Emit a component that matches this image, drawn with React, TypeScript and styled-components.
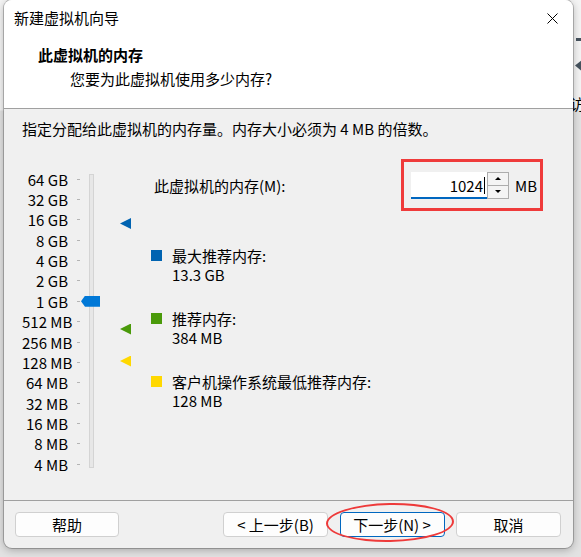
import React from "react";
import styled, { createGlobalStyle } from "styled-components";

const GlobalStyle = createGlobalStyle`
  html, body {
    margin: 0;
    padding: 0;
  }
  body {
    background: #e9e9e9;
    font-family: "Noto Sans CJK SC", "Noto Sans", sans-serif;
    font-size: 15px;
    color: #000;
  }
`;

const Screen = styled.div`
  position: relative;
  width: 581px;
  height: 557px;
  overflow: hidden;
  padding-left: 4px;
  box-sizing: border-box;
  background: linear-gradient(#f4f4f4 0, #f4f4f4 110px, #e2e2e2 111px);
`;

const DeskDash = styled.div`
  position: absolute;
  left: 576px;
  top: 38px;
  width: 8px;
  height: 3px;
  background: #46535e;
`;

const DeskArrow = styled.div`
  position: absolute;
  left: 575px;
  top: 59px;
  width: 8px;
  height: 13px;
  background: #46535e;
  clip-path: polygon(0 50%, 100% 0, 100% 100%);
`;

const DeskGlyph = styled.div`
  position: absolute;
  left: 570px;
  top: 96px;
  font-size: 15px;
  line-height: 16px;
`;

const Dialog = styled.div`
  position: relative;
  z-index: 1;
  width: 569px;
  height: 548px;
  display: flex;
  flex-direction: column;
  border-radius: 8px;
  overflow: hidden;
  background: #f0f0f0;
  box-shadow: 0 0 0 1px rgba(0, 0, 0, 0.22), 0 2px 8px rgba(0, 0, 0, 0.28);
`;

const Header = styled.div`
  flex-shrink: 0;
  height: 108px;
  background: #fff;
  border-bottom: 1px solid #a0a0a0;
`;

const TitleBar = styled.div`
  height: 36px;
  display: flex;
  align-items: center;
  justify-content: space-between;
  padding-left: 10px;
  line-height: 20px;
`;

const CloseButton = styled.div`
  width: 42px;
  height: 36px;
  display: flex;
  align-items: center;
  justify-content: center;
`;

const HeaderText = styled.div`
  padding-left: 34px;
  margin-top: 9px;
  line-height: 20px;
`;

const HeaderTitle = styled.div`
  font-weight: 700;
`;

const HeaderSubtitle = styled.div`
  padding-left: 32px;
  margin-top: 4px;
`;

const Body = styled.div`
  flex: 1;
  padding: 10px 0 0 18px;
  box-sizing: border-box;
`;

const Description = styled.div`
  line-height: 20px;
`;

const Main = styled.div`
  display: flex;
  margin-top: 30px;
`;

const Slider = styled.div`
  position: relative;
  width: 129px;
  flex-shrink: 0;
`;

const ScaleRow = styled.div`
  height: 20.36px;
  display: flex;
  align-items: center;
`;

const ScaleLabel = styled.div`
  width: 46px;
  text-align: right;
  line-height: 1;
  white-space: nowrap;
`;

const Tick = styled.div`
  width: 3px;
  height: 1px;
  margin-left: 9px;
  background: #b4b4b4;
`;

const Track = styled.div`
  position: absolute;
  left: 67px;
  top: 5px;
  width: 5px;
  height: 294px;
  box-sizing: border-box;
  background: #e7e7e7;
  border: 1px solid #d4d4d4;
`;

const Thumb = styled.div<{ $center: number }>`
  position: absolute;
  left: 59px;
  top: ${({ $center }) => $center - 5.5}px;
  width: 19px;
  height: 11px;
  background: #0078d7;
  clip-path: polygon(0 50%, 4px 0, 100% 0, 100% 100%, 4px 100%);
`;

const Marker = styled.div<{ $color: string; $center: number }>`
  position: absolute;
  left: 98px;
  top: ${({ $center }) => $center - 5.5}px;
  width: 11px;
  height: 11px;
  background: ${({ $color }) => $color};
  clip-path: polygon(0 50%, 100% 0, 100% 100%);
`;

const RightPane = styled.div`
  flex: 1;
  display: flex;
  flex-direction: column;
`;

const MemoryRow = styled.div`
  display: flex;
  align-items: center;
  height: 32px;
`;

const MemoryLabel = styled.div`
  width: 260px;
  padding-left: 3px;
  box-sizing: border-box;
`;

const InputGroup = styled.div`
  position: relative;
  display: flex;
  align-items: center;
`;

const NumberField = styled.div`
  width: 76px;
  height: 27px;
  box-sizing: border-box;
  background: #fff;
  border-bottom: 2px solid #0067c0;
  display: flex;
  align-items: center;
  justify-content: flex-end;
  padding: 2px 2px 0 0;
`;

const Caret = styled.span`
  display: inline-block;
  width: 1px;
  height: 17px;
  margin-left: 1px;
  background: #000;
`;

const Spinner = styled.div`
  width: 22px;
  height: 27px;
  box-sizing: border-box;
  display: flex;
  flex-direction: column;
  border: 1px solid #adadad;
`;

const SpinHalf = styled.div<{ $top?: boolean }>`
  flex: 1;
  display: flex;
  align-items: center;
  justify-content: center;
  background: #f4f4f4;
  border-bottom: ${({ $top }) => ($top ? "1px solid #adadad" : "none")};
`;

const SpinArrow = styled.div<{ $up?: boolean }>`
  width: 0;
  height: 0;
  border-left: 3px solid transparent;
  border-right: 3px solid transparent;
  ${({ $up }) =>
    $up ? "border-bottom: 3px solid #000;" : "border-top: 3px solid #000;"}
`;

const Unit = styled.div`
  margin-left: 6px;
`;

const RedBox = styled.div`
  position: absolute;
  left: -10px;
  top: -13px;
  width: 142px;
  height: 52px;
  box-sizing: border-box;
  border: 3px solid #ef3b3b;
  pointer-events: none;
`;

const Legend = styled.div`
  display: flex;
  flex-direction: column;
  gap: 25px;
  margin-top: 45px;
`;

const LegendItem = styled.div`
  line-height: 19px;
`;

const LegendHead = styled.div`
  display: flex;
  align-items: center;
`;

const Swatch = styled.div<{ $color: string }>`
  width: 11px;
  height: 11px;
  margin-right: 10px;
  background: ${({ $color }) => $color};
`;

const LegendValue = styled.div`
  padding-left: 21px;
`;

const Footer = styled.div`
  flex-shrink: 0;
  height: 47px;
  box-sizing: content-box;
  border-top: 1px solid #a0a0a0;
  display: flex;
  align-items: flex-start;
  padding: 11px 12px 0 11px;
  box-sizing: border-box;
  height: 48px;
`;

const Spacer = styled.div`
  flex: 1;
`;

const ButtonGroup = styled.div`
  display: flex;
  gap: 11.5px;
`;

const ButtonWrap = styled.div`
  position: relative;
`;

const Button = styled.div<{ $primary?: boolean }>`
  width: 105px;
  height: 25px;
  box-sizing: border-box;
  display: flex;
  align-items: center;
  justify-content: center;
  background: #fdfdfd;
  border: 1px solid ${({ $primary }) => ($primary ? "#0067c0" : "#d0d0d0")};
  border-radius: 4px;
  line-height: 1;
  white-space: pre;
`;

const RedEllipse = styled.div`
  position: absolute;
  left: -14px;
  top: -9px;
  width: 128px;
  height: 39px;
  box-sizing: border-box;
  border: 2.5px solid #ee3a3a;
  border-radius: 50%;
  transform: rotate(-1deg);
  pointer-events: none;
`;

const scale = [
  "64 GB",
  "32 GB",
  "16 GB",
  "8 GB",
  "4 GB",
  "2 GB",
  "1 GB",
  "512 MB",
  "256 MB",
  "128 MB",
  "64 MB",
  "32 MB",
  "16 MB",
  "8 MB",
  "4 MB",
];

const legend = [
  { color: "#0063b1", label: "最大推荐内存:", value: "13.3 GB", center: 54.5 },
  { color: "#4a9a0a", label: "推荐内存:", value: "384 MB", center: 160 },
  { color: "#ffd800", label: "客户机操作系统最低推荐内存:", value: "128 MB", center: 192 },
];

const rowCenter = (i: number) => 10.18 + i * 20.36;

export default function App() {
  return (
    <>
      <GlobalStyle />
      <Screen>
        <DeskDash />
        <DeskArrow />
        <DeskGlyph>访</DeskGlyph>
        <Dialog>
          <Header>
            <TitleBar>
              <span>新建虚拟机向导</span>
              <CloseButton>
                <svg width="11" height="11" viewBox="0 0 11 11">
                  <path d="M0.5 0.5 L10.5 10.5 M10.5 0.5 L0.5 10.5" stroke="#000" strokeWidth="1" />
                </svg>
              </CloseButton>
            </TitleBar>
            <HeaderText>
              <HeaderTitle>此虚拟机的内存</HeaderTitle>
              <HeaderSubtitle>您要为此虚拟机使用多少内存?</HeaderSubtitle>
            </HeaderText>
          </Header>
          <Body>
            <Description>指定分配给此虚拟机的内存量。内存大小必须为 4 MB 的倍数。</Description>
            <Main>
              <Slider>
                {scale.map((s) => (
                  <ScaleRow key={s}>
                    <ScaleLabel>{s}</ScaleLabel>
                    <Tick />
                  </ScaleRow>
                ))}
                <Track />
                <Thumb $center={rowCenter(6)} />
                {legend.map((l) => (
                  <Marker key={l.color} $color={l.color} $center={l.center} />
                ))}
              </Slider>
              <RightPane>
                <MemoryRow>
                  <MemoryLabel>此虚拟机的内存(M):</MemoryLabel>
                  <InputGroup>
                    <NumberField>
                      1024
                      <Caret />
                    </NumberField>
                    <Spinner>
                      <SpinHalf $top>
                        <SpinArrow $up />
                      </SpinHalf>
                      <SpinHalf>
                        <SpinArrow />
                      </SpinHalf>
                    </Spinner>
                    <Unit>MB</Unit>
                    <RedBox />
                  </InputGroup>
                </MemoryRow>
                <Legend>
                  {legend.map((l) => (
                    <LegendItem key={l.label}>
                      <LegendHead>
                        <Swatch $color={l.color} />
                        <span>{l.label}</span>
                      </LegendHead>
                      <LegendValue>{l.value}</LegendValue>
                    </LegendItem>
                  ))}
                </Legend>
              </RightPane>
            </Main>
          </Body>
          <Footer>
            <Button style={{ width: 104 }}>帮助</Button>
            <Spacer />
            <ButtonGroup>
              <Button>{"< 上一步(B)"}</Button>
              <ButtonWrap>
                <Button $primary>{"下一步(N) >"}</Button>
                <RedEllipse />
              </ButtonWrap>
              <Button>取消</Button>
            </ButtonGroup>
          </Footer>
        </Dialog>
      </Screen>
    </>
  );
}
